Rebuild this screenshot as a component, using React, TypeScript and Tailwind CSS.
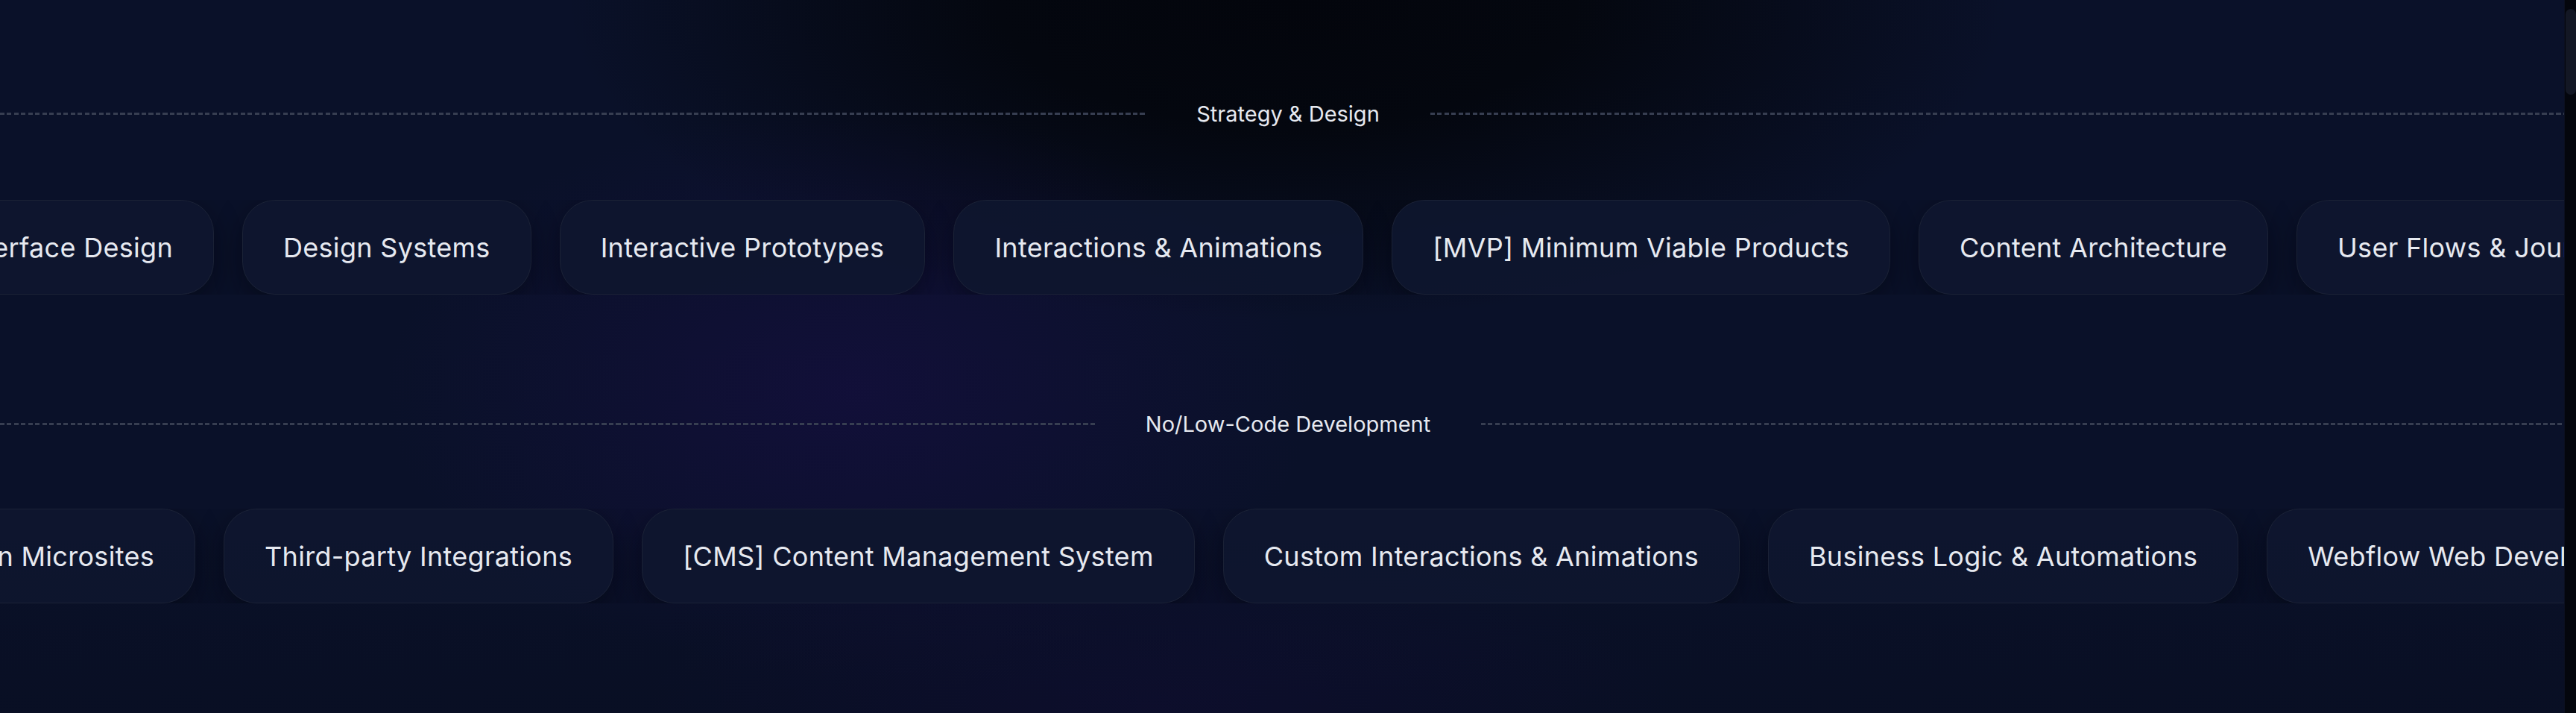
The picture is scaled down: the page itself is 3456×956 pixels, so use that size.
import React from "react";

const FONT = "font-['Inter','Noto_Sans',sans-serif]";

function Chip({ label }: { label: string }) {
  return (
    <div className="shrink-0 h-[127px] px-[54px] flex items-center rounded-[44px] border border-[#1b2236] bg-[#0e162f]/90 shadow-[0_12px_36px_rgba(2,4,12,0.45)] whitespace-nowrap text-[36px] leading-none tracking-[0.3px] text-[#e6e9f0]">
      {label}
    </div>
  );
}

function Divider({ label }: { label: string }) {
  return (
    <div className="flex items-center h-[36px]">
      <div className="flex-1 h-[3px] bg-[repeating-linear-gradient(90deg,#373e51_0px,#373e51_6px,transparent_6px,transparent_9.5px)]" />
      <div className="mx-[68px] text-[29px] leading-none text-[#e6e9f0] whitespace-nowrap">{label}</div>
      <div className="flex-1 h-[3px] bg-[repeating-linear-gradient(90deg,#373e51_0px,#373e51_6px,transparent_6px,transparent_9.5px)]" />
    </div>
  );
}

function Row({ first, firstEnd, items }: { first: string; firstEnd: string; items: string[] }) {
  return (
    <div className="flex gap-[38px] overflow-hidden">
      <div className={`shrink-0 flex justify-end ${firstEnd}`}>
        <Chip label={first} />
      </div>
      {items.map((t) => (
        <Chip key={t} label={t} />
      ))}
    </div>
  );
}

export default function App() {
  return (
    <div className={`relative w-full h-[956px] overflow-hidden bg-[#0a1129] ${FONT}`}>
      {/* background glows */}
      <div className="pointer-events-none absolute inset-0 bg-[radial-gradient(ellipse_28%_45%_at_50%_0%,#03050c_0%,#04070f_40%,transparent_100%)]" />
      <div className="pointer-events-none absolute inset-0 bg-[radial-gradient(ellipse_18%_40%_at_33%_55%,rgba(24,14,70,0.55)_0%,transparent_100%)]" />
      <div className="pointer-events-none absolute inset-0 bg-[radial-gradient(ellipse_20%_25%_at_45%_100%,rgba(22,14,64,0.45)_0%,transparent_100%)]" />
      <div className="pointer-events-none absolute inset-0 bg-[linear-gradient(180deg,transparent_0%,transparent_70%,rgba(5,8,20,0.25)_100%)]" />

      <div className="relative flex flex-col pt-[134px]">
        <Divider label="Strategy & Design" />
        <div className="mt-[98px]">
          <Row
            first="User Interface Design"
            firstEnd="w-[287px]"
            items={[
              "Design Systems",
              "Interactive Prototypes",
              "Interactions & Animations",
              "[MVP] Minimum Viable Products",
              "Content Architecture",
              "User Flows & Journeys",
            ]}
          />
        </div>
        <div className="mt-[155px]">
          <Divider label="No/Low-Code Development" />
        </div>
        <div className="mt-[96px]">
          <Row
            first="Campaign Microsites"
            firstEnd="w-[262px]"
            items={[
              "Third-party Integrations",
              "[CMS] Content Management System",
              "Custom Interactions & Animations",
              "Business Logic & Automations",
              "Webflow Web Development",
            ]}
          />
        </div>
      </div>

      {/* scrollbar */}
      <div className="absolute right-0 top-0 h-full w-[16px] bg-[#04060d] border-l border-[#0c1020]">
        <div className="mt-[12px] mx-auto w-[14px] h-[115px] rounded-full bg-[#131724]" />
      </div>
    </div>
  );
}
